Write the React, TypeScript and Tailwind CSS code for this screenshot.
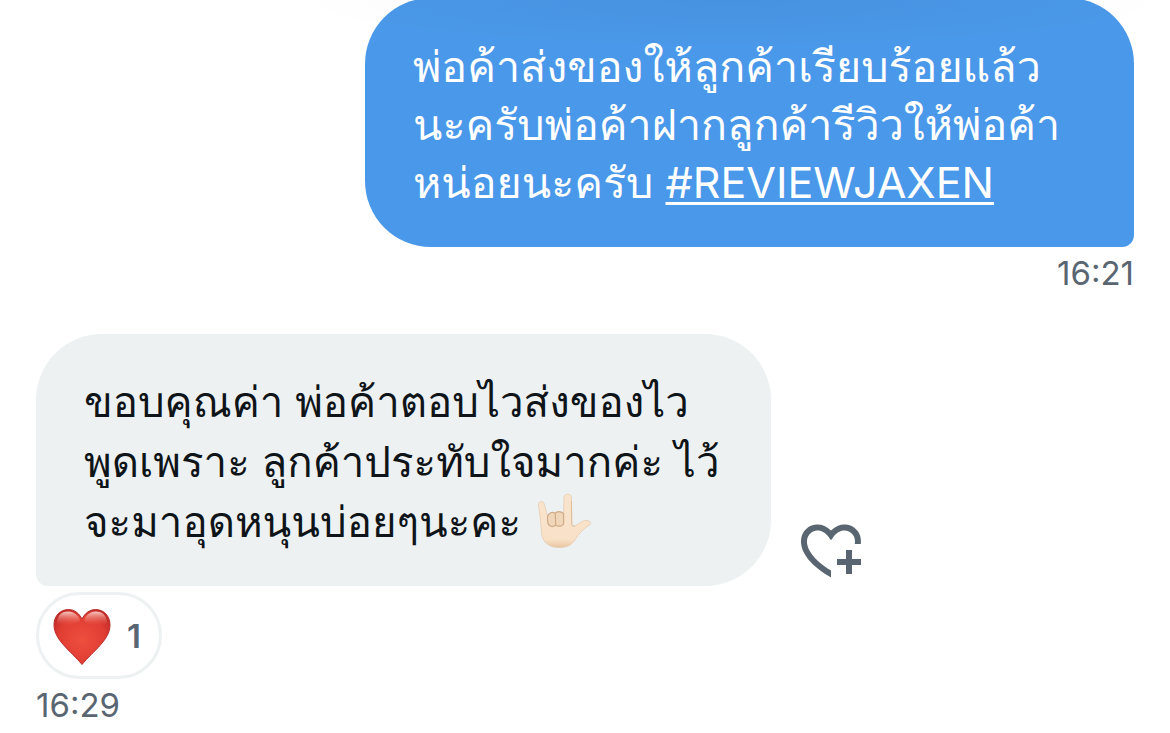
function HandEmoji() {
  return (
    <svg role="img" aria-label="Love-you gesture" viewBox="0 0 56 56" className="ml-1 inline-block size-14 align-[-12px]">
      <defs>
        <linearGradient id="skin" x1="0" y1="0" x2="0" y2="1">
          <stop offset="0" stopColor="#f9e4cd" />
          <stop offset="0.85" stopColor="#f8e1c7" />
          <stop offset="1" stopColor="#e8c6a2" />
        </linearGradient>
      </defs>
      <path
        d="M1.400 12.200C.8 8.500 6 7 7.200 10.700L10.600 23.500C11.500 19.500 16 18.600 18 20.400C20.400 17.800 24 18.600 26.600 20.600L27 4C27.200.4 34.200.3 34.400 4L34.800 31C35 32.900 36 33.700 38 32.800C42 31 45.500 27 49.500 27.500C54 28 55 30.500 52 32.500C46 36 42 40.500 38.500 46C35 52 30 54.500 22 54.500C11.500 54.500 5.500 49 4.500 40C3.900 31 3 21 1.400 12.200Z"
        fill="url(#skin)"
        stroke="#e3c3a2"
        strokeWidth="0.6"
      />
      <path
        d="M10.600 23.500C10.300 28 10.500 31 12.500 32.500C15 34.300 18 33.500 18.600 31.800C20.500 34 26 33.500 26.600 30.500L26.600 20.600M18.400 20.800L18.600 31.800M10.600 23.500C11.500 19.500 16 18.600 18 20.400C20.400 17.800 24 18.600 26.600 20.600"
        fill="#f1d7ba"
        stroke="#cfab88"
        strokeWidth="1.2"
        strokeLinecap="round"
      />
      <path d="M34.400 8L34.800 31C35 33 36.200 33.600 38 32.800" fill="none" stroke="#dfbd9b" strokeWidth="1" />
    </svg>
  );
}

function HeartEmoji() {
  return (
    <svg role="img" aria-label="Red heart" viewBox="0 0 58 58" className="size-[58px]">
      <defs>
        <radialGradient id="heart" cx="0.5" cy="0.55" r="0.6">
          <stop offset="0" stopColor="#ee4f3e" />
          <stop offset="0.7" stopColor="#e03d33" />
          <stop offset="1" stopColor="#c42c28" />
        </radialGradient>
        <linearGradient id="shine" x1="0" y1="0" x2="0" y2="1">
          <stop offset="0" stopColor="#ffe3dc" stopOpacity="0.85" />
          <stop offset="1" stopColor="#f26a5c" stopOpacity="0" />
        </linearGradient>
      </defs>
      <path
        d="M29 11C32 5 37 1.500 42.500 1.500C51 1.500 57 8 57 17C57 32 40 43 29 56.500C18 43 1 32 1 17C1 8 7 1.500 15.500 1.500C21 1.500 26 5 29 11Z"
        fill="url(#heart)"
        stroke="#b92d2b"
        strokeWidth="1"
      />
      <path d="M4 14C5 6 10 3.300 15.500 3.500C21 3.800 25 7 27 12C25 17 5 20 4 14Z" fill="url(#shine)" />
      <path d="M31 12C33 7 37 3.800 42.500 3.500C48 3.300 53 6 54 14C53 20 33 17 31 12Z" fill="url(#shine)" />
    </svg>
  );
}

function AddReactionIcon() {
  return (
    <svg aria-hidden="true" viewBox="0 0 24 24" fill="currentColor" className="size-18">
      <path d="M17 12v3h-2.998v2h3v3h2v-3h3v-2h-3.001v-3H17zm-5 6.839c-3.871-2.34-6.053-4.639-7.127-6.609-1.112-2.04-1.031-3.7-.479-4.82.561-1.13 1.667-1.84 2.91-1.91 1.222-.06 2.68.51 3.892 2.16l.806 1.09.805-1.09c1.211-1.65 2.668-2.22 3.89-2.16 1.242.07 2.347.78 2.908 1.91.334.677.49 1.554.321 2.59h2.011c.153-1.283-.039-2.469-.539-3.48-.887-1.79-2.647-2.91-4.601-3.01-1.65-.09-3.367.56-4.796 2.01-1.43-1.45-3.147-2.1-4.798-2.01-1.954.1-3.714 1.22-4.601 3.01-.896 1.81-.846 4.17.514 6.67 1.353 2.48 4.003 5.12 8.382 7.67l.502.299v-2.32z" />
    </svg>
  );
}

export default function App() {
  return (
    <main className="relative flex min-h-screen flex-col overflow-hidden bg-white px-9 font-['Inter','Loma',sans-serif] text-[#0f1419]">
      <article className="-mt-0.5 flex flex-col items-end">
        <p className="w-full max-w-[769px] rounded-[66px] rounded-br-xl bg-[#4a98e9] px-12 pt-[39px] pb-9 text-[43px] leading-[58px] text-white">
          พ่อค้าส่งของให้ลูกค้าเรียบร้อยแล้ว
          <br />
          นะครับพ่อค้าฝากลูกค้ารีวิวให้พ่อค้า
          <br />
          หน่อยนะครับ{' '}
          <a href="#REVIEWJAXEN" className="underline decoration-3 underline-offset-4">
            #REVIEWJAXEN
          </a>
        </p>
        <time className="mt-1.5 text-[33px] leading-10 text-[#596672]">16:21</time>
      </article>

      <article className="mt-[41px] flex flex-col items-start">
        <div className="flex w-full items-end gap-6">
          <p className="w-full max-w-[735px] rounded-[66px] rounded-bl-xl bg-[#edf1f2] px-12 pt-[38px] pb-[34px] text-[42px] leading-[60px]">
            ขอบคุณค่า พ่อค้าตอบไวส่งของไว
            <br />
            พูดเพราะ ลูกค้าประทับใจมากค่ะ ไว้
            <br />
            จะมาอุดหนุนบ่อยๆนะคะ <HandEmoji />
          </p>
          <button type="button" aria-label="Add reaction" className="shrink-0 text-[#596672]">
            <AddReactionIcon />
          </button>
        </div>
        <button
          type="button"
          className="mt-1.5 flex h-[87px] items-center gap-4 rounded-full border-3 border-[#edf1f2] bg-white pt-0.5 pr-[18px] pl-3.5 text-[33px] font-semibold text-[#596672]"
        >
          <HeartEmoji />
          <span>1</span>
        </button>
        <time className="mt-1.5 text-[33px] leading-10 text-[#596672]">16:29</time>
      </article>

      <div className="pointer-events-none absolute top-0 right-0 h-12 w-3/4 bg-[radial-gradient(50%_100%_at_50%_0%,rgb(0_0_0/0.04),transparent)]" />
    </main>
  );
}
